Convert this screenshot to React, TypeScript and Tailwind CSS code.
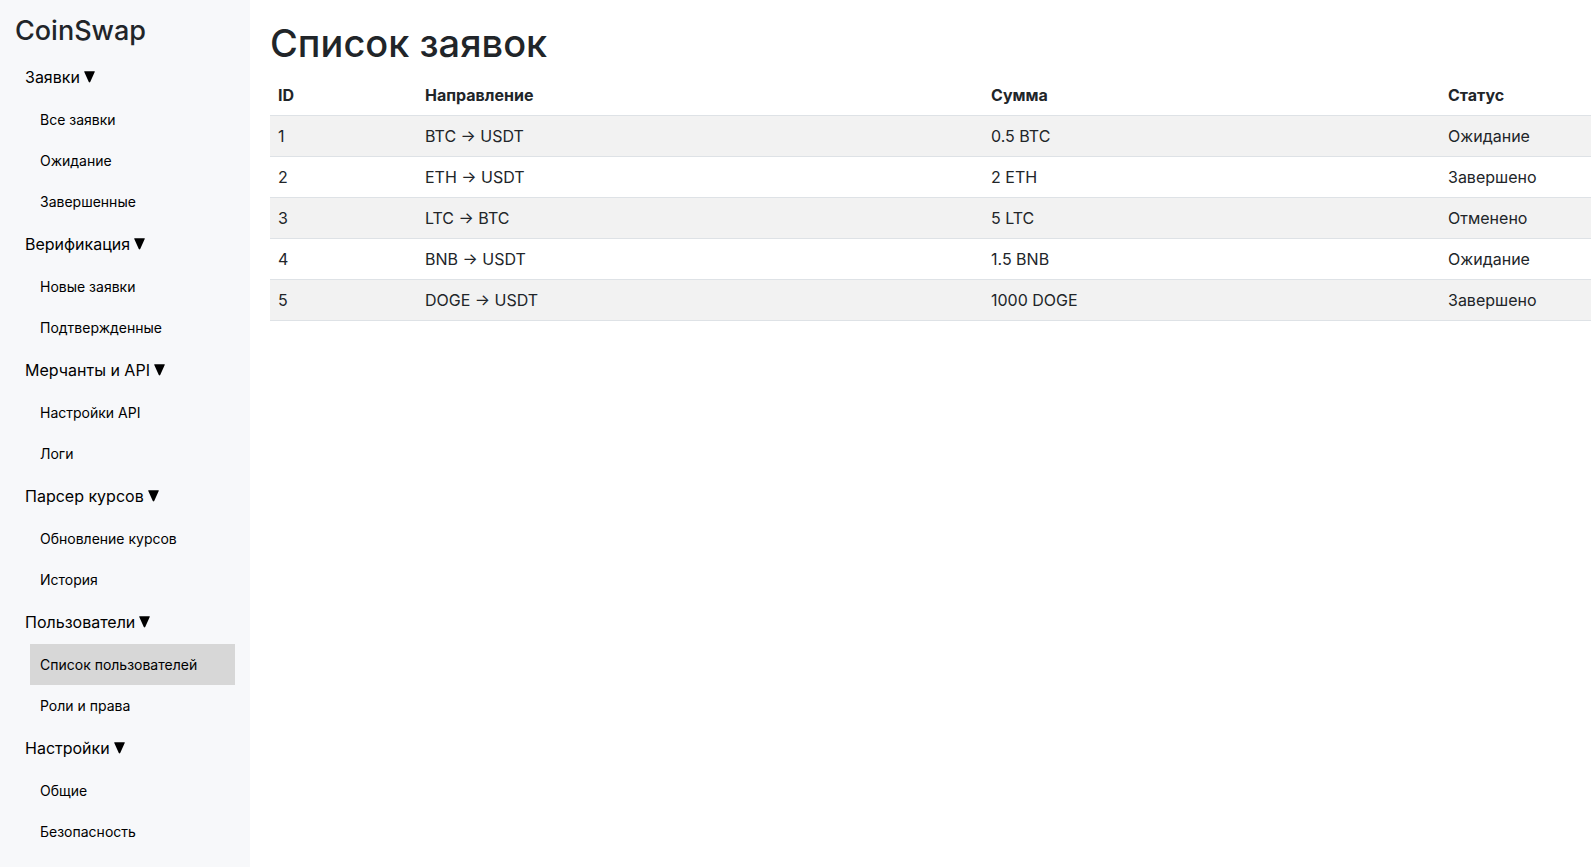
const menu = [
  { title: "Заявки", items: ["Все заявки", "Ожидание", "Завершенные"] },
  { title: "Верификация", items: ["Новые заявки", "Подтвержденные"] },
  { title: "Мерчанты и API", items: ["Настройки API", "Логи"] },
  { title: "Парсер курсов", items: ["Обновление курсов", "История"] },
  { title: "Пользователи", items: ["Список пользователей", "Роли и права"] },
  { title: "Настройки", items: ["Общие", "Безопасность"] },
];

const active = "Список пользователей";

const orders = [
  { id: 1, direction: "BTC → USDT", amount: "0.5 BTC", status: "Ожидание" },
  { id: 2, direction: "ETH → USDT", amount: "2 ETH", status: "Завершено" },
  { id: 3, direction: "LTC → BTC", amount: "5 LTC", status: "Отменено" },
  { id: 4, direction: "BNB → USDT", amount: "1.5 BNB", status: "Ожидание" },
  { id: 5, direction: "DOGE → USDT", amount: "1000 DOGE", status: "Завершено" },
];

function Sidebar() {
  return (
    <aside className="w-[250px] shrink-0 bg-[#f7f8fa] p-[15px]">
      <h2 className="mb-2 text-[27px] leading-8 font-medium">CoinSwap</h2>
      <nav className="text-black">
        {menu.map((group) => (
          <div key={group.title}>
            <button type="button" className="flex w-full items-center gap-1 p-[10px] text-left text-base leading-6">
              {group.title}
              <svg aria-hidden="true" viewBox="0 0 11 12" className="h-3 w-[11px]" fill="currentColor">
                <path d="M0.7 0.2h9.6q0.8 0 0.4 0.8L6.2 11.1q-0.7 0.9-1.4 0L0.3 1q-0.4-0.8 0.4-0.8z" />
              </svg>
            </button>
            <ul className="pl-[15px]">
              {group.items.map((item) => (
                <li key={item}>
                  <a
                    href="#"
                    className={
                      item === active
                        ? "block bg-[#d7d7d7] p-[10px] text-sm leading-[21px]"
                        : "block p-[10px] text-sm leading-[21px]"
                    }
                  >
                    {item}
                  </a>
                </li>
              ))}
            </ul>
          </div>
        ))}
      </nav>
    </aside>
  );
}

export default function App() {
  return (
    <div className="flex min-h-screen overflow-hidden bg-white font-['Inter','Liberation_Sans',sans-serif] text-[#212529]">
      <Sidebar />
      <main className="min-w-0 grow pt-5 pl-5">
        <h1 className="mb-2 text-[38px] leading-[47px] font-medium">Список заявок</h1>
        <table className="w-full table-fixed border-collapse text-left text-base leading-6">
          <thead>
            <tr className="border-b border-[#dee2e6]">
              <th className="w-[147px] p-2 font-bold">ID</th>
              <th className="w-[566px] p-2 font-bold">Направление</th>
              <th className="w-[457px] p-2 font-bold">Сумма</th>
              <th className="p-2 font-bold">Статус</th>
            </tr>
          </thead>
          <tbody>
            {orders.map((order) => (
              <tr key={order.id} className="border-b border-[#dee2e6] odd:bg-[#f2f2f2]">
                <td className="p-2">{order.id}</td>
                <td className="p-2">{order.direction}</td>
                <td className="p-2">{order.amount}</td>
                <td className="p-2">{order.status}</td>
              </tr>
            ))}
          </tbody>
        </table>
      </main>
    </div>
  );
}
